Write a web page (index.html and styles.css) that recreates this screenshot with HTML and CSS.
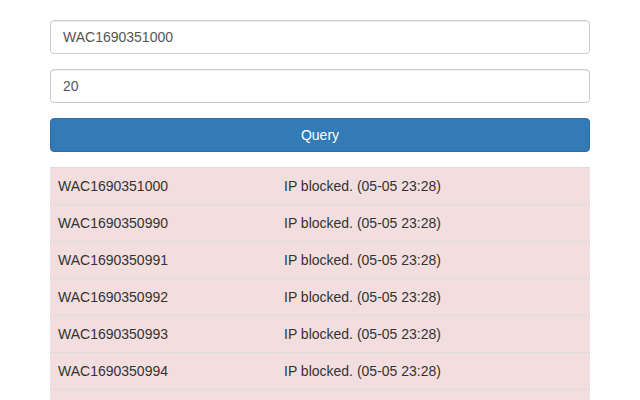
FILE: index.html
```html
<!DOCTYPE html>
<html>
<head>
<meta charset="utf-8">
<link rel="stylesheet" href="styles.css">
</head>
<body>
<div class="container">
  <form class="query-form">
    <input class="field" type="text" value="WAC1690351000">
    <input class="field" type="text" value="20">
    <button class="btn-query" type="button">Query</button>
  </form>
  <table class="results">
    <colgroup><col class="col-id"><col class="col-status"></colgroup>
    <tbody>
      <tr><td>WAC1690351000</td><td>IP blocked. (05-05 23:28)</td></tr>
      <tr><td>WAC1690350990</td><td>IP blocked. (05-05 23:28)</td></tr>
      <tr><td>WAC1690350991</td><td>IP blocked. (05-05 23:28)</td></tr>
      <tr><td>WAC1690350992</td><td>IP blocked. (05-05 23:28)</td></tr>
      <tr><td>WAC1690350993</td><td>IP blocked. (05-05 23:28)</td></tr>
      <tr><td>WAC1690350994</td><td>IP blocked. (05-05 23:28)</td></tr>
      <tr><td>WAC1690350995</td><td>IP blocked. (05-05 23:28)</td></tr>
    </tbody>
  </table>
</div>
</body>
</html>
```
FILE: styles.css
```css
* { box-sizing: border-box; }
html, body {
  margin: 0;
  background: #fff;
  font-family: "Liberation Sans", Arial, Helvetica, sans-serif;
  font-size: 14px;
  line-height: 20px;
  color: #333;
}
.container {
  padding: 20px 50px;
}
.query-form {
  display: flex;
  flex-direction: column;
  gap: 15px;
  margin: 0 0 15px;
}
.field {
  display: block;
  width: 100%;
  height: 34px;
  padding: 6px 12px;
  font-family: inherit;
  font-size: 14px;
  line-height: 20px;
  color: #555;
  background: #fff;
  border: 1px solid #ccc;
  border-radius: 4px;
  box-shadow: inset 0 1px 1px rgba(0,0,0,.075);
  margin: 0;
}
.btn-query {
  display: block;
  width: 100%;
  height: 34px;
  padding: 6px 12px;
  font-family: inherit;
  font-size: 14px;
  line-height: 20px;
  color: #fff;
  background: #337ab7;
  border: 1px solid #2e6da4;
  border-radius: 4px;
  margin: 0;
}
.results {
  width: 100%;
  table-layout: fixed;
  border-collapse: collapse;
  border-spacing: 0;
}
.col-id { width: 226px; }
.results td {
  padding: 8px;
  line-height: 20px;
  border-top: 1px solid #ddd;
  background: #f2dede;
  vertical-align: top;
  white-space: nowrap;
}
```
